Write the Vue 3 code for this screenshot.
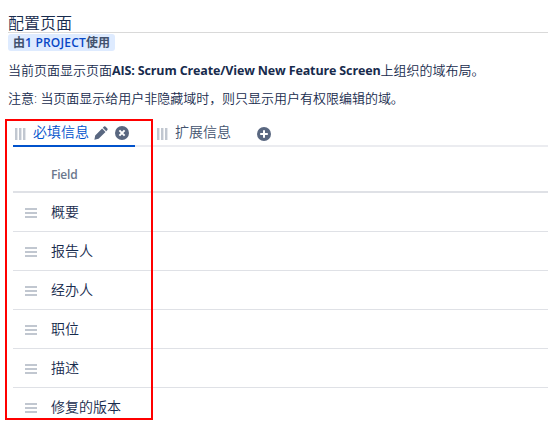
<script setup>
const fields = ['概要', '报告人', '经办人', '职位', '描述', '修复的版本']
</script>

<template>
  <main class="page">
    <h1 class="title">配置页面</h1>
    <div class="badge">由<a class="link">1 PROJECT</a>使用</div>
    <p class="para">当前页面显示页面<strong class="name">AIS: Scrum Create/View New Feature Screen</strong>上组织的域布局。</p>
    <p class="para second">注意: 当页面显示给用户非隐藏域时，则只显示用户有权限编辑的域。</p>
    <nav class="tabs">
      <div class="tab active">
        <i class="grip"></i>
        <span class="label">必填信息</span>
        <svg class="pencil" width="14" height="14" viewBox="0 0 14 14">
          <path d="M1.2 9.4 8.1 2.5l3.4 3.4-6.9 6.9-4.2 1zM8.8 1.8 10 .6q.7-.6 1.4 0l2 2q.6.7 0 1.4l-1.2 1.2z" />
        </svg>
        <svg class="close" width="14" height="14" viewBox="0 0 14 14">
          <circle cx="7" cy="7" r="7" />
          <path class="mark" d="m4.4 4.4 5.2 5.2m0-5.2L4.4 9.6" />
        </svg>
      </div>
      <div class="tab other">
        <i class="grip"></i>
        <span class="label">扩展信息</span>
      </div>
      <svg class="add" width="14" height="14" viewBox="0 0 14 14">
        <circle cx="7" cy="7" r="7" />
        <path class="mark" d="M7 3.2v7.6M3.2 7h7.6" />
      </svg>
    </nav>
    <section class="table">
      <div class="head"><span class="headtext">Field</span></div>
      <div v-for="f in fields" :key="f" class="row">
        <i class="handle"></i>
        <span>{{ f }}</span>
      </div>
    </section>
    <div class="highlight"></div>
  </main>
</template>

<style>
body { background: #fff; overflow: hidden; }
</style>

<style scoped>
.page {
  position: relative;
  box-sizing: border-box;
  width: 548px;
  height: 424px;
  padding: 12px 0 0 8px;
  overflow: hidden;
  color: #172b4d;
  font-family: "Open Sans", "Noto Sans CJK SC", sans-serif;
  font-weight: 350;
}
.title {
  box-sizing: border-box;
  height: 21px;
  margin: 0;
  border-bottom: 1px solid #d9d9d9;
  font: 350 16px/20px "Noto Sans CJK SC", sans-serif;
}
.badge {
  width: 107px;
  height: 17px;
  margin-top: 1px;
  padding-left: 5px;
  box-sizing: border-box;
  border-radius: 3px;
  background: #deebff;
  color: #42526e;
  font-size: 12px;
  font-weight: 700;
  line-height: 17px;
  white-space: nowrap;
}
.link { color: #0747c6; font-weight: 600; letter-spacing: 0.2px; }
.para {
  height: 20px;
  margin: 9px 0 0;
  font-size: 13px;
  line-height: 20px;
  white-space: nowrap;
}
.second { margin-top: 8px; letter-spacing: -0.02px; }
.name { font-size: 12.5px; font-weight: 700; letter-spacing: -0.14px; }
.tabs {
  display: flex;
  box-sizing: border-box;
  height: 27px;
  margin: 12px 0 0 5px;
  border-bottom: 2px solid #ebecf0;
}
.tab {
  display: flex;
  box-sizing: border-box;
  height: 27px;
  color: #42526e;
  font-size: 14px;
  line-height: 24px;
  white-space: nowrap;
}
.active { width: 122px; border-bottom: 2px solid #0052cc; color: #0052cc; }
.other { margin-left: 21px; }
.grip {
  width: 11px;
  height: 12px;
  margin: 8px 7px 0 2px;
  background: repeating-linear-gradient(90deg, #c1c7d0 0 2px, #e4e7eb 2px 3px, transparent 3px 4px);
}
.other .grip { margin-left: 1px; margin-right: 7px; }
.label { width: 56px; }
.pencil { margin: 6px 0 0 5px; fill: #596780; }
.close { margin: 6px 0 0 7px; fill: #596780; }
.add { margin: 7px 0 0 26px; fill: #596780; }
.mark { fill: none; stroke: #fff; stroke-width: 2; }
.table { margin-left: 5px; }
.head {
  box-sizing: border-box;
  height: 46px;
  padding: 18px 0 0 38px;
  border-bottom: 2px solid #dfe1e6;
  color: #6b778c;
  font-size: 12px;
  font-weight: 600;
  letter-spacing: -0.2px;
  line-height: 20px;
}
.row {
  display: flex;
  box-sizing: border-box;
  height: 39px;
  border-bottom: 1px solid #dfe1e6;
  font-size: 14px;
  line-height: 38px;
}
.handle {
  width: 12px;
  height: 10px;
  margin: 15px 14px 0 12px;
  background: repeating-linear-gradient(#c1c7d0 0 2px, transparent 2px 4px);
}
.highlight {
  position: absolute;
  top: 119px;
  left: 5px;
  box-sizing: border-box;
  width: 148px;
  height: 301px;
  border: 2px solid #f00;
}
</style>
